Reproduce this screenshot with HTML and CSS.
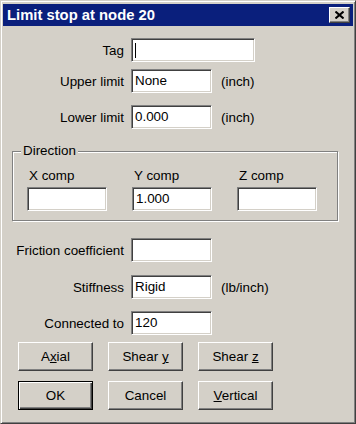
FILE: index.html
```html
<!DOCTYPE html>
<html lang="en">
<head>
    <meta charset="UTF-8">
    <title>Limit stop at node 20</title>
    <link rel="stylesheet" href="styles.css">
</head>
<body>
    <div class="dialog">
        <div class="titlebar">
            <span class="title">Limit stop at node 20</span>
            <span class="close-btn">
                <svg width="9" height="8" viewBox="0 0 9 8">
                    <path d="M0.5 0.5 L8.5 7.5 M8.5 0.5 L0.5 7.5" stroke="#000" stroke-width="2" fill="none"/>
                </svg>
            </span>
        </div>

        <div class="client">
            <div class="field row-tag">
                <label>Tag</label>
                <div class="edit wide"><span class="caret"></span></div>
            </div>
            <div class="field row-upper">
                <label>Upper limit</label>
                <div class="edit">None</div>
                <span class="unit">(inch)</span>
            </div>
            <div class="field row-lower">
                <label>Lower limit</label>
                <div class="edit">0.000</div>
                <span class="unit">(inch)</span>
            </div>

            <fieldset class="group">
                <legend>Direction</legend>
                <div class="comps">
                    <div class="comp">
                        <span>X comp</span>
                        <div class="edit"></div>
                    </div>
                    <div class="comp">
                        <span>Y comp</span>
                        <div class="edit">1.000</div>
                    </div>
                    <div class="comp">
                        <span>Z comp</span>
                        <div class="edit"></div>
                    </div>
                </div>
            </fieldset>

            <div class="field row-friction">
                <label>Friction coefficient</label>
                <div class="edit"></div>
            </div>
            <div class="field row-stiff">
                <label>Stiffness</label>
                <div class="edit">Rigid</div>
                <span class="unit">(lb/inch)</span>
            </div>
            <div class="field row-conn">
                <label>Connected to</label>
                <div class="edit">120</div>
            </div>

            <div class="buttons row-btn1">
                <div class="btn"><span>A<u>x</u>ial</span></div>
                <div class="btn"><span>Shear <u>y</u></span></div>
                <div class="btn"><span>Shear <u>z</u></span></div>
            </div>
            <div class="buttons row-btn2">
                <div class="btn default"><span>OK</span></div>
                <div class="btn"><span>Cancel</span></div>
                <div class="btn"><span><u>V</u>ertical</span></div>
            </div>
        </div>
    </div>
</body>
</html>
```

FILE: styles.css
```css
body {
    margin: 0;
    font-family: "Liberation Sans", Arial, sans-serif;
    font-size: 13.4px;
    color: #000;
}
.dialog {
    width: 356px;
    height: 424px;
    box-sizing: border-box;
    background-color: #d4d0c8;
    border: 1px solid;
    border-color: #d4d0c8 #404040 #404040 #d4d0c8;
    box-shadow: inset 1px 1px #fff, inset -1px -1px #808080;
    padding: 2px;
}
.titlebar {
    height: 22px;
    margin-top: 1px;
    background-color: #0a1f7c;
    display: flex;
    align-items: center;
    justify-content: space-between;
    padding: 0 3px 0 4px;
}
.title {
    color: #fff;
    font-weight: bold;
    font-size: 14.8px;
}
.close-btn {
    width: 21px;
    height: 16px;
    box-sizing: border-box;
    background-color: #d4d0c8;
    border: 1px solid;
    border-color: #fff #404040 #404040 #fff;
    box-shadow: inset -1px -1px #808080;
    display: flex;
    align-items: center;
    justify-content: center;
}
.field {
    display: grid;
    grid-template-columns: 121px auto auto;
    column-gap: 7px;
    align-items: center;
    justify-content: start;
}
.field label {
    text-align: right;
}
.unit {
    margin-left: 2px;
}
.edit {
    width: 81px;
    height: 24px;
    box-sizing: border-box;
    background-color: #fff;
    border: 1px solid;
    border-color: #808080 #fff #fff #808080;
    box-shadow: inset 1px 1px #404040, inset -1px -1px #d4d0c8;
    padding-left: 3px;
    line-height: 22px;
}
.edit.wide {
    width: 124px;
}
.caret {
    display: inline-block;
    width: 1px;
    height: 15px;
    background-color: #000;
    vertical-align: middle;
}
.row-tag { margin-top: 12px; }
.row-upper { margin-top: 7px; }
.row-lower { margin-top: 12px; }
.group {
    margin: 14px 0 0 9px;
    width: 326px;
    box-sizing: border-box;
    border: 1px solid #808080;
    box-shadow: inset 1px 1px #fff, 1px 1px #fff;
    padding: 9px 0 9px 14px;
}
.group legend {
    padding: 0 2px;
    margin-left: -6px;
    line-height: 16px;
    background-color: #d4d0c8;
}
.comps {
    display: flex;
    gap: 25px;
}
.comp {
    display: flex;
    flex-direction: column;
    gap: 3px;
}
.comp span {
    line-height: 16px;
    padding-left: 2px;
}
.comp .edit {
    width: 80px;
}
.row-friction { margin-top: 17px; }
.row-stiff { margin-top: 13px; }
.row-conn { margin-top: 12px; }
.buttons {
    display: flex;
    gap: 15px;
    padding-left: 15px;
}
.row-btn1 { margin-top: 7px; }
.row-btn2 { margin-top: 10px; }
.btn {
    width: 75px;
    height: 29px;
    box-sizing: border-box;
    border: 1px solid;
    border-color: #fff #404040 #404040 #fff;
    box-shadow: inset -1px -1px #808080;
    display: flex;
    align-items: center;
    justify-content: center;
}
.btn.default {
    border: 1px solid #000;
    box-shadow: inset 1px 1px #fff, inset -1px -1px #404040, inset -2px -2px #808080;
}
```
